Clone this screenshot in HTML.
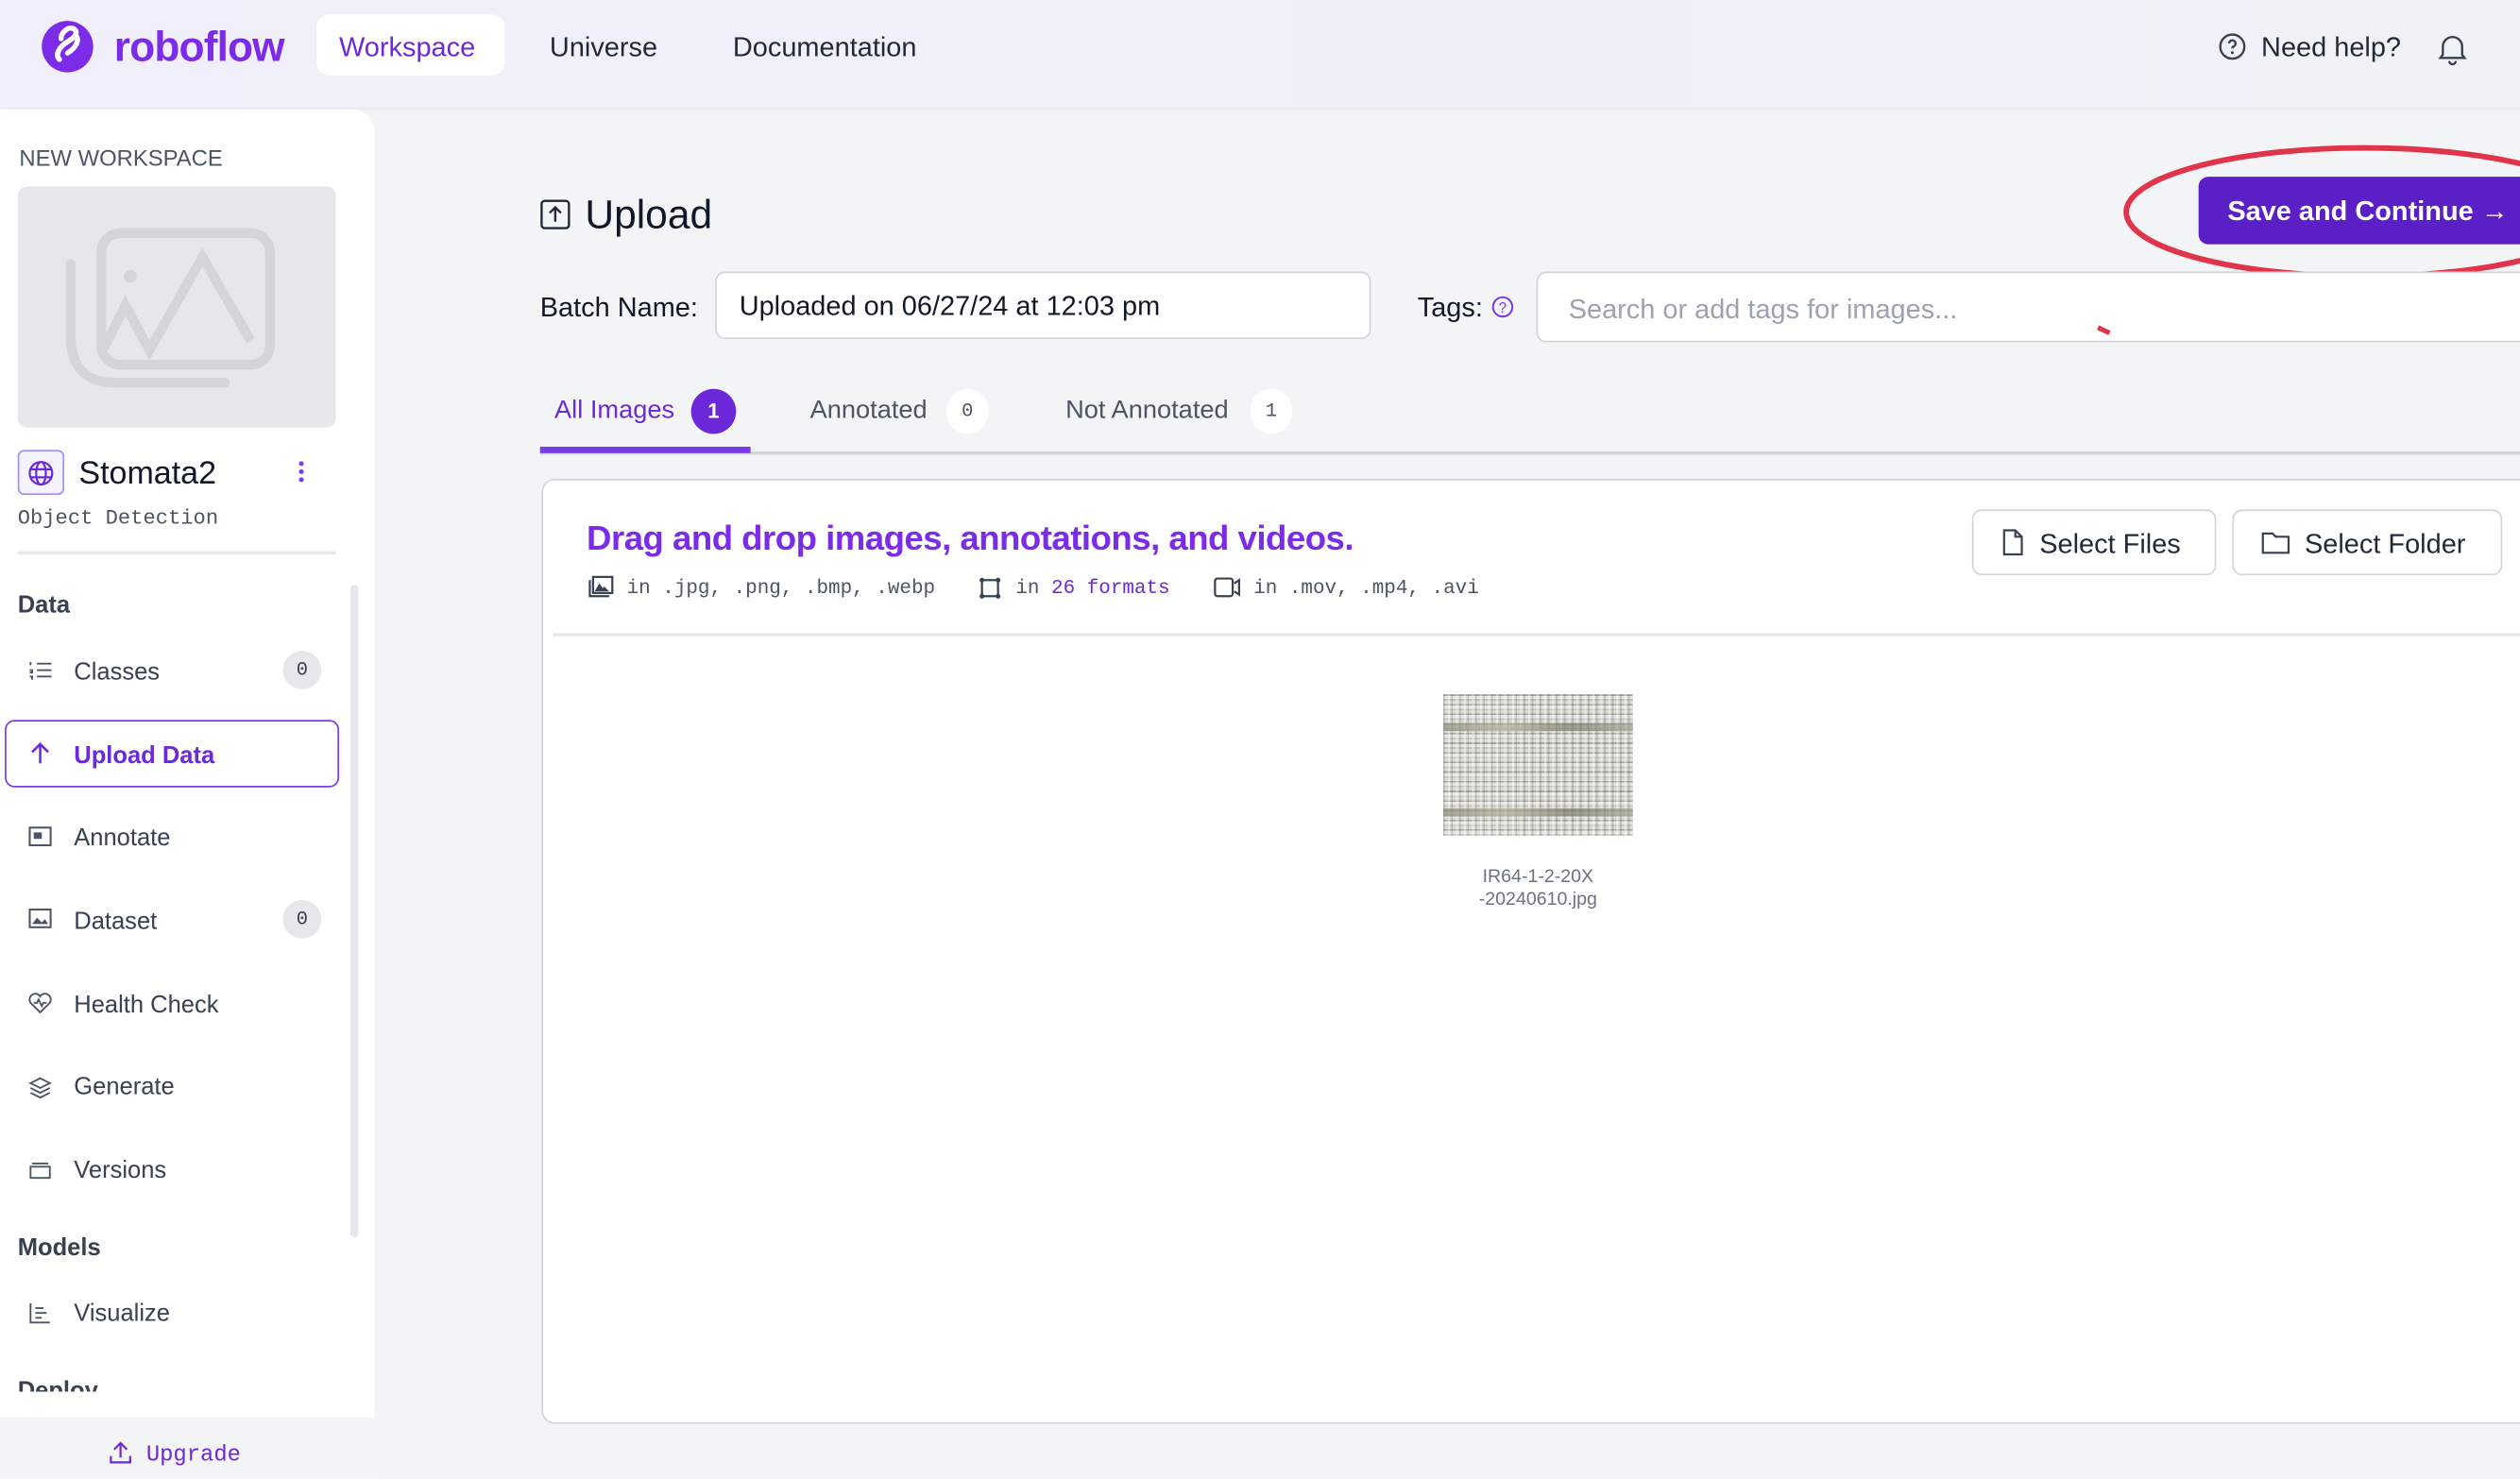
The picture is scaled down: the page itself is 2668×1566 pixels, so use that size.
<!DOCTYPE html>
<html><head><meta charset="utf-8"><style>
*{box-sizing:border-box;margin:0;padding:0}
html,body{width:2668px;height:1566px;overflow:hidden;background:#f3f4f6}
#w{position:absolute;left:0;top:0;width:1568px;height:920px;transform:scale(1.70153);transform-origin:0 0;font-family:"Liberation Sans",sans-serif;color:#1f2937;background:#f3f4f6;overflow:hidden}
.a{position:absolute}
.mono{font-family:"Liberation Mono",monospace}
.nav{font-size:17px;color:#1f2937}
.side{font-size:15px;color:#374151}
.ic{position:absolute;left:17px;width:16px;height:16px}
.badge{position:absolute;left:176px;width:24px;height:24px;border-radius:12px;background:#e5e7eb;font:12px "Liberation Mono",monospace;text-align:center;line-height:24px;color:#374151}
</style></head><body><div id="w">
<div class="a" style="left:0;top:0;width:1568px;height:67px;background:linear-gradient(90deg,#f1effb,#eef0f9 60%,#f1f2f8);box-shadow:0 1px 3px rgba(0,0,0,.08)"></div>
<svg class="a" style="left:25px;top:12px" width="34" height="34" viewBox="0 0 34 34"><circle cx="17" cy="17" r="16" fill="#7c2be8"/><path d="M12 25c-3-3 0-8 5-11s7-6 4-8-8 2-8 6M22 10c3 3 0 8-5 11" stroke="#fff" stroke-width="3.2" fill="none" stroke-linecap="round"/></svg>
<div class="a" style="left:71px;top:14px;font-size:26px;font-weight:bold;color:#7c2be8;letter-spacing:-0.5px">roboflow</div>
<div class="a" style="left:197px;top:9px;width:117px;height:38px;background:#fff;border-radius:8px"></div>
<div class="a nav" style="left:211px;top:20px;color:#6d28d9">Workspace</div>
<div class="a nav" style="left:342px;top:20px">Universe</div>
<div class="a nav" style="left:456px;top:20px">Documentation</div>
<svg class="a" style="left:1380px;top:20px" width="18" height="18" viewBox="0 0 18 18"><circle cx="9" cy="9" r="7.5" fill="none" stroke="#374151" stroke-width="1.4"/><path d="M7 7a2 2 0 1 1 2.5 2c-.5.2-.5.6-.5 1.2" fill="none" stroke="#374151" stroke-width="1.4"/><circle cx="9" cy="12.8" r=".9" fill="#374151"/></svg>
<div class="a nav" style="left:1407px;top:20px">Need help?</div>
<svg class="a" style="left:1515px;top:19px" width="22" height="22" viewBox="0 0 22 22"><path d="M5 15V10a6 6 0 0 1 12 0v5l1.5 2h-15z M9 19a2 2 0 0 0 4 0" fill="none" stroke="#374151" stroke-width="1.4"/></svg>
<div class="a" style="left:0;top:68px;width:233px;height:852px;background:#fff;border-top-right-radius:14px"></div>
<div class="a" style="left:12px;top:90px;font-size:14px;color:#4b5563">NEW WORKSPACE</div>
<div class="a" style="left:11px;top:116px;width:198px;height:150px;background:#e5e7eb;border-radius:6px"></div>
<svg class="a" style="left:40px;top:140px" width="132" height="104" viewBox="0 0 132 104"><rect x="23" y="5" width="105" height="82" rx="12" fill="none" stroke="#d4d5da" stroke-width="6"/><path d="M4 24v46c0 18 10 28 26 28h70" fill="none" stroke="#d4d5da" stroke-width="6" stroke-linecap="round"/><circle cx="41" cy="32" r="4" fill="#d4d5da"/><path d="M23 80l15-30 15 28 33-58 30 52" fill="none" stroke="#d4d5da" stroke-width="6"/></svg>
<div class="a" style="left:11px;top:280px;width:29px;height:28px;border:1.5px solid #a78bfa;border-radius:4px;background:#f5f3ff"></div>
<svg class="a" style="left:17px;top:286px" width="17" height="17" viewBox="0 0 17 17"><circle cx="8.5" cy="8.5" r="7" fill="none" stroke="#6d28d9" stroke-width="1.3"/><ellipse cx="8.5" cy="8.5" rx="3" ry="7" fill="none" stroke="#6d28d9" stroke-width="1.3"/><path d="M1.5 6h14M1.5 11h14" stroke="#6d28d9" stroke-width="1.3"/></svg>
<div class="a" style="left:49px;top:284px;font-size:20px;color:#111827">Stomata2</div>
<div class="a" style="left:186px;top:287px;width:3px;height:3px;border-radius:2px;background:#7c3aed;box-shadow:0 5px 0 #7c3aed,0 10px 0 #7c3aed"></div>
<div class="a mono" style="left:11px;top:315px;font-size:13px;color:#4b5563">Object Detection</div>
<div class="a" style="left:11px;top:343px;width:198px;height:1.5px;background:#e5e7eb"></div>
<div class="a" style="left:218px;top:364px;width:5px;height:406px;background:#e5e7eb;border-radius:3px"></div>
<div class="a" style="left:11px;top:368px;font-size:15px;font-weight:bold;color:#374151">Data</div>
<svg class="ic" style="top:409px" viewBox="0 0 16 16"><path d="M6 4h9M6 8h9M6 12h9M2 3v2M1.5 8h1.5v1.5h-1.5M1.5 12h1.5v2" stroke="#4b5563" fill="none" stroke-width="1.1"/></svg>
<div class="a side" style="left:46px;top:410px">Classes</div><div class="badge" style="top:405px">0</div>
<div class="a" style="left:3px;top:448px;width:208px;height:42px;border:1.5px solid #7c3aed;border-radius:6px;background:#fff"></div>
<svg class="ic" style="top:461px" viewBox="0 0 16 16"><path d="M8 14V2M3 7l5-5 5 5" stroke="#6d28d9" fill="none" stroke-width="1.5"/></svg>
<div class="a side" style="left:46px;top:462px;color:#6d28d9;font-weight:bold">Upload Data</div>
<svg class="ic" style="top:513px" viewBox="0 0 16 16"><rect x="1.5" y="2" width="13" height="11" fill="none" stroke="#4b5563" stroke-width="1.2"/><rect x="4" y="5" width="5" height="4" fill="#4b5563"/></svg>
<div class="a side" style="left:46px;top:513px">Annotate</div>
<svg class="ic" style="top:564px" viewBox="0 0 16 16"><rect x="1.5" y="2" width="13" height="11" fill="none" stroke="#4b5563" stroke-width="1.2"/><path d="M3 11l3-4 3 3 2-2 2 3z" fill="#4b5563"/></svg>
<div class="a side" style="left:46px;top:565px">Dataset</div><div class="badge" style="top:560px">0</div>
<svg class="ic" style="top:616px" viewBox="0 0 16 16"><path d="M8 14L2 8a3.3 3.3 0 0 1 6-4 3.3 3.3 0 0 1 6 4z M4 8h2l1-2 2 4 1-2h2" fill="none" stroke="#4b5563" stroke-width="1.1"/></svg>
<div class="a side" style="left:46px;top:617px">Health Check</div>
<svg class="ic" style="top:668px" viewBox="0 0 16 16"><path d="M2 6l6-3 6 3-6 3z M2 9l6 3 6-3 M2 12l6 3 6-3" fill="none" stroke="#4b5563" stroke-width="1.1"/></svg>
<div class="a side" style="left:46px;top:668px">Generate</div>
<svg class="ic" style="top:720px" viewBox="0 0 16 16"><path d="M3 4h10M2 6h12v7H2z" fill="none" stroke="#4b5563" stroke-width="1.1"/></svg>
<div class="a side" style="left:46px;top:720px">Versions</div>
<div class="a" style="left:11px;top:768px;font-size:15px;font-weight:bold;color:#374151">Models</div>
<svg class="ic" style="top:809px" viewBox="0 0 16 16"><path d="M2 2v12h12M5 5h5M5 8h7M5 11h4" fill="none" stroke="#4b5563" stroke-width="1.1"/></svg>
<div class="a side" style="left:46px;top:809px">Visualize</div>
<div class="a" style="left:11px;top:857px;font-size:15px;font-weight:bold;color:#374151;height:9px;overflow:hidden">Deploy</div>
<div class="a" style="left:0;top:882px;width:233px;height:38px;background:#f3f4f6"></div>
<svg class="a" style="left:67px;top:896px" width="16" height="16" viewBox="0 0 16 16"><path d="M8 11V2M4 6l4-4 4 4M2 10v4h12v-4" fill="none" stroke="#6d28d9" stroke-width="1.3"/></svg>
<div class="a mono" style="left:91px;top:898px;font-size:14px;color:#6d28d9">Upgrade</div>
<svg class="a" style="left:336px;top:124px" width="19" height="19" viewBox="0 0 19 19"><rect x="1" y="1" width="17" height="17" rx="2" fill="none" stroke="#1f2937" stroke-width="1.4"/><path d="M9.5 14V5M6 8.5l3.5-3.5 3.5 3.5" fill="none" stroke="#1f2937" stroke-width="1.4"/></svg>
<div class="a" style="left:364px;top:120px;font-size:25px;color:#111827">Upload</div>
<div class="a" style="left:1368px;top:110px;width:210px;height:42px;background:#5b1fc6;border-radius:6px"></div>
<div class="a" style="left:1386px;top:122px;font-size:17px;font-weight:bold;color:#fff">Save and Continue →</div>
<svg class="a" style="left:1318px;top:86px" width="260" height="94" viewBox="0 0 260 94"><ellipse cx="153" cy="46" rx="148" ry="40" fill="none" stroke="#e0344a" stroke-width="3.5"/></svg>
<div class="a" style="left:336px;top:182px;font-size:17px;color:#111827">Batch Name:</div>
<div class="a" style="left:445px;top:169px;width:408px;height:42px;background:#fff;border:1.5px solid #d1d5db;border-radius:6px"></div>
<div class="a" style="left:460px;top:181px;font-size:17px;color:#111827">Uploaded on 06/27/24 at 12:03 pm</div>
<div class="a" style="left:882px;top:182px;font-size:17px;color:#111827">Tags:</div>
<svg class="a" style="left:928px;top:184px" width="14" height="14" viewBox="0 0 14 14"><circle cx="7" cy="7" r="6" fill="none" stroke="#7c3aed" stroke-width="1.2"/><text x="7" y="10.5" font-size="9" text-anchor="middle" fill="#7c3aed" font-family="Liberation Sans">?</text></svg>
<div class="a" style="left:956px;top:169px;width:640px;height:44px;background:#fff;border:1.5px solid #d1d5db;border-radius:6px"></div>
<div class="a" style="left:976px;top:183px;font-size:17px;color:#9ca3af">Search or add tags for images...</div>
<div class="a" style="left:1305px;top:204px;width:8px;height:3px;background:#e0344a;transform:rotate(25deg)"></div>
<div class="a" style="left:336px;top:281px;width:1240px;height:1.5px;background:#d1d5db"></div>
<div class="a" style="left:336px;top:278px;width:131px;height:4px;background:#7c3aed"></div>
<div class="a" style="left:345px;top:247px;font-size:16px;color:#6d28d9">All Images</div>
<div class="a" style="left:430px;top:242px;width:28px;height:28px;border-radius:14px;background:#6d28d9;color:#fff;font-size:13px;font-weight:bold;text-align:center;line-height:28px">1</div>
<div class="a" style="left:504px;top:247px;font-size:16px;color:#4b5563">Annotated</div>
<div class="a mono" style="left:589px;top:242px;width:26px;height:28px;border-radius:14px;background:#fff;font-size:12px;text-align:center;line-height:28px;color:#4b5563">0</div>
<div class="a" style="left:663px;top:247px;font-size:16px;color:#4b5563">Not Annotated</div>
<div class="a mono" style="left:778px;top:242px;width:26px;height:28px;border-radius:14px;background:#fff;font-size:12px;text-align:center;line-height:28px;color:#4b5563">1</div>
<div class="a" style="left:337px;top:298px;width:1260px;height:588px;background:#fff;border:1.5px solid #d1d5db;border-radius:8px"></div>
<div class="a" style="left:344px;top:394px;width:1240px;height:1.5px;background:#e5e7eb"></div>
<div class="a" style="left:365px;top:323px;font-size:21.5px;font-weight:bold;color:#7c2be8;letter-spacing:-0.3px">Drag and drop images, annotations, and videos.</div>
<svg class="a" style="left:366px;top:358px" width="16" height="14" viewBox="0 0 16 14"><rect x="3" y="1" width="12" height="10" fill="none" stroke="#374151" stroke-width="1.3"/><path d="M1 3v10h12" fill="none" stroke="#374151" stroke-width="1.3"/><path d="M4 10l3-5 2 3 1-1 3 3z" fill="#374151"/></svg>
<svg class="a" style="left:609px;top:359px" width="14" height="14" viewBox="0 0 14 14"><rect x="2" y="2" width="10" height="10" fill="none" stroke="#374151" stroke-width="1.3"/><circle cx="2" cy="2" r="1.5" fill="#374151"/><circle cx="12" cy="2" r="1.5" fill="#374151"/><circle cx="2" cy="12" r="1.5" fill="#374151"/><circle cx="12" cy="12" r="1.5" fill="#374151"/></svg>
<svg class="a" style="left:755px;top:359px" width="18" height="13" viewBox="0 0 18 13"><rect x="1" y="1" width="11" height="11" rx="1.5" fill="none" stroke="#374151" stroke-width="1.3"/><path d="M13 4l3-2v9l-3-2" fill="none" stroke="#374151" stroke-width="1.3"/></svg>
<div class="a mono" style="left:390px;top:359px;font-size:12.3px;color:#4b5563;white-space:pre">in .jpg, .png, .bmp, .webp</div>
<div class="a mono" style="left:632px;top:359px;font-size:12.3px;color:#4b5563;white-space:pre">in <span style="color:#6d28d9">26 formats</span></div>
<div class="a mono" style="left:780px;top:359px;font-size:12.3px;color:#4b5563;white-space:pre">in .mov, .mp4, .avi</div>
<div class="a" style="left:1227px;top:317px;width:152px;height:41px;border:1.5px solid #d1d5db;border-radius:6px;background:#fff"></div>
<svg class="a" style="left:1245px;top:329px" width="15" height="17" viewBox="0 0 15 17"><path d="M2 1h7l4 4v11H2z M9 1v4h4" fill="none" stroke="#374151" stroke-width="1.3"/></svg>
<div class="a" style="left:1269px;top:329px;font-size:17px;color:#1f2937">Select Files</div>
<div class="a" style="left:1389px;top:317px;width:168px;height:41px;border:1.5px solid #d1d5db;border-radius:6px;background:#fff"></div>
<svg class="a" style="left:1407px;top:330px" width="18" height="15" viewBox="0 0 18 15"><path d="M1 2h6l2 2h8v10H1z" fill="none" stroke="#374151" stroke-width="1.3"/></svg>
<div class="a" style="left:1434px;top:329px;font-size:17px;color:#1f2937">Select Folder</div>
<div class="a" style="left:898px;top:432px;width:118px;height:88px;background:repeating-linear-gradient(90deg,rgba(90,90,80,.25) 0 1px,transparent 1px 3px,rgba(255,255,255,.4) 3px 4px,transparent 4px 5px),repeating-linear-gradient(0deg,#c4c4c0 0 1px,#e6e6e2 1px 3px,#a8a8a0 3px 4px,#dcdcd6 4px 6px)"></div>
<div class="a" style="left:898px;top:450px;width:118px;height:5px;background:linear-gradient(90deg,#8a8a78,#b0ad98,#7a7a68,#a0a090);opacity:.7"></div>
<div class="a" style="left:898px;top:503px;width:118px;height:5px;background:linear-gradient(90deg,#8a8a78,#b0ad98,#7a7a68,#a0a090);opacity:.7"></div>
<div class="a" style="left:898px;top:539px;width:118px;text-align:center;font-size:11.5px;color:#6b7280;line-height:14px">IR64-1-2-20X<br>-20240610.jpg</div>
</div></body></html>
